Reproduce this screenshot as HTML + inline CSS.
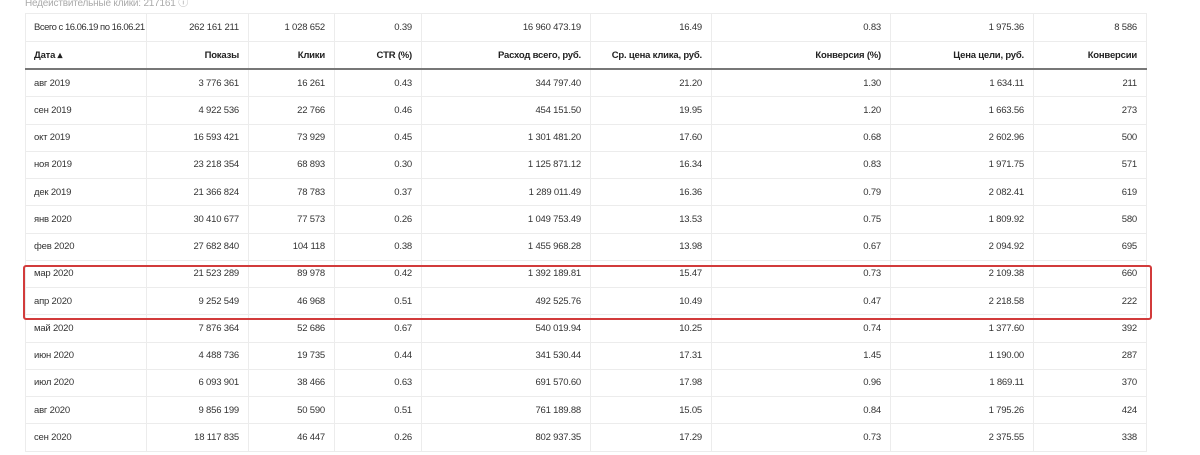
<!DOCTYPE html><html><head><meta charset="utf-8"><style>
body{margin:0;width:1200px;height:455px;overflow:hidden;background:#fff;font-family:"Liberation Sans",sans-serif;font-size:9.5px;color:#333;position:relative;letter-spacing:-0.2px}
.top{position:absolute;left:25px;top:-6px;color:#aaa;font-size:10px}
table{position:absolute;left:25px;top:13px;border-collapse:collapse;table-layout:fixed;width:1121px}
td{border:1px solid #ececec;height:26.25px;padding:0 9px;text-align:right;white-space:nowrap;overflow:hidden}
td:first-child{text-align:left;padding-left:8px;padding-right:2px}
tr.s td{height:27px}
tr.s td:first-child{letter-spacing:-0.5px}
tr.h td{height:26px;font-weight:bold;border-bottom:2px solid #777;color:#222}
.box{position:absolute;left:23px;top:265px;width:1125px;height:51px;border:2px solid #d23b3b;border-radius:3px}
</style></head><body>
<div class="top">Недействительные клики: 217161 ⓘ</div>
<table>
<colgroup><col style="width:121px"><col style="width:102px"><col style="width:86px"><col style="width:87px"><col style="width:169px"><col style="width:121px"><col style="width:179px"><col style="width:143px"><col style="width:113px"></colgroup>
<tr class="s"><td>Всего с 16.06.19 по 16.06.21</td><td>262 161 211</td><td>1 028 652</td><td>0.39</td><td>16 960 473.19</td><td>16.49</td><td>0.83</td><td>1 975.36</td><td>8 586</td></tr>
<tr class="h"><td>Дата ▴</td><td>Показы</td><td>Клики</td><td>CTR (%)</td><td>Расход всего, руб.</td><td>Ср. цена клика, руб.</td><td>Конверсия (%)</td><td>Цена цели, руб.</td><td>Конверсии</td></tr>
<tr><td>авг 2019</td><td>3 776 361</td><td>16 261</td><td>0.43</td><td>344 797.40</td><td>21.20</td><td>1.30</td><td>1 634.11</td><td>211</td></tr>
<tr><td>сен 2019</td><td>4 922 536</td><td>22 766</td><td>0.46</td><td>454 151.50</td><td>19.95</td><td>1.20</td><td>1 663.56</td><td>273</td></tr>
<tr><td>окт 2019</td><td>16 593 421</td><td>73 929</td><td>0.45</td><td>1 301 481.20</td><td>17.60</td><td>0.68</td><td>2 602.96</td><td>500</td></tr>
<tr><td>ноя 2019</td><td>23 218 354</td><td>68 893</td><td>0.30</td><td>1 125 871.12</td><td>16.34</td><td>0.83</td><td>1 971.75</td><td>571</td></tr>
<tr><td>дек 2019</td><td>21 366 824</td><td>78 783</td><td>0.37</td><td>1 289 011.49</td><td>16.36</td><td>0.79</td><td>2 082.41</td><td>619</td></tr>
<tr><td>янв 2020</td><td>30 410 677</td><td>77 573</td><td>0.26</td><td>1 049 753.49</td><td>13.53</td><td>0.75</td><td>1 809.92</td><td>580</td></tr>
<tr><td>фев 2020</td><td>27 682 840</td><td>104 118</td><td>0.38</td><td>1 455 968.28</td><td>13.98</td><td>0.67</td><td>2 094.92</td><td>695</td></tr>
<tr><td>мар 2020</td><td>21 523 289</td><td>89 978</td><td>0.42</td><td>1 392 189.81</td><td>15.47</td><td>0.73</td><td>2 109.38</td><td>660</td></tr>
<tr><td>апр 2020</td><td>9 252 549</td><td>46 968</td><td>0.51</td><td>492 525.76</td><td>10.49</td><td>0.47</td><td>2 218.58</td><td>222</td></tr>
<tr><td>май 2020</td><td>7 876 364</td><td>52 686</td><td>0.67</td><td>540 019.94</td><td>10.25</td><td>0.74</td><td>1 377.60</td><td>392</td></tr>
<tr><td>июн 2020</td><td>4 488 736</td><td>19 735</td><td>0.44</td><td>341 530.44</td><td>17.31</td><td>1.45</td><td>1 190.00</td><td>287</td></tr>
<tr><td>июл 2020</td><td>6 093 901</td><td>38 466</td><td>0.63</td><td>691 570.60</td><td>17.98</td><td>0.96</td><td>1 869.11</td><td>370</td></tr>
<tr><td>авг 2020</td><td>9 856 199</td><td>50 590</td><td>0.51</td><td>761 189.88</td><td>15.05</td><td>0.84</td><td>1 795.26</td><td>424</td></tr>
<tr><td>сен 2020</td><td>18 117 835</td><td>46 447</td><td>0.26</td><td>802 937.35</td><td>17.29</td><td>0.73</td><td>2 375.55</td><td>338</td></tr>
</table>
<div class="box"></div>
</body></html>
